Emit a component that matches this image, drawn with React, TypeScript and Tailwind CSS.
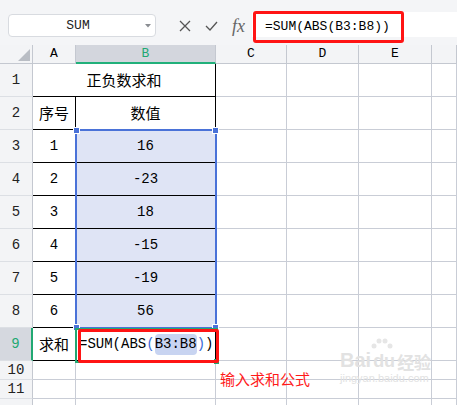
import React from 'react'

const mono = { fontFamily: '"Liberation Mono", "Noto Sans CJK SC", monospace' }
const cjk = { fontFamily: '"Noto Sans CJK SC", "Liberation Sans", sans-serif' }

const values = [
  ['1', '16'],
  ['2', '-23'],
  ['3', '18'],
  ['4', '-15'],
  ['5', '-19'],
  ['6', '56'],
]

function EmptyCells({ h }: { h: string }) {
  return (
    <>
      {[0, 1, 2, 3].map((i) => (
        <div key={i} className={`${h} border-b border-r border-[#c9cdd6]`} />
      ))}
    </>
  )
}

function RowHead({ n, h = 'h-[33px]', active = false }: { n?: number; h?: string; active?: boolean }) {
  return (
    <div
      className={`${h} flex items-center justify-center border-b border-[#dcdfe4] text-[14px] ${
        active ? 'border-r-2 border-r-[#21a872] bg-[#d5d8df] text-[#21a872]' : 'border-r border-r-[#c4c8d0] bg-[#f3f4f6] text-[#222]'
      }`}
      style={mono}
    >
      {n}
    </div>
  )
}

export default function App() {
  return (
    <div className="relative h-[405px] w-[457px] overflow-hidden bg-white">
      {/* formula toolbar */}
      <div className="flex h-[45px] items-start bg-[#f4f5f7] pt-[14px]">
        <div className="ml-2 flex h-[23px] w-[148px] items-center rounded-[4px] border border-[#d8dbe0] bg-white">
          <span className="flex-1 pl-[2px] text-center text-[13px] text-[#222]" style={mono}>SUM</span>
          <svg width="6" height="4" viewBox="0 0 6 4" className="mr-[4px]"><path d="M0 0h6L3 3.5z" fill="#8a8d92" /></svg>
        </div>
        <div className="ml-[23px] flex h-[23px] items-center gap-[14px]">
          <svg width="12" height="12" viewBox="0 0 12 12"><path d="M1 1l10 10M11 1L1 11" stroke="#555" strokeWidth="1.3" /></svg>
          <svg width="13" height="10" viewBox="0 0 13 10"><path d="M1 5l4 4 7-8" stroke="#555" strokeWidth="1.3" fill="none" /></svg>
          <span className="text-[18px] italic leading-none text-[#666]" style={{ fontFamily: '"Liberation Serif", serif' }}>fx</span>
        </div>
        <div className="relative ml-[7px] -mt-[2px] h-[25px] flex-1 bg-white">
          <div className="absolute -top-[1px] left-[1px] flex h-[32px] w-[151px] items-center rounded-[3px] border-[3px] border-[#ff1414] pl-[9px]">
            <span className="text-[13px] text-black" style={mono}>=SUM(ABS(B3:B8))</span>
          </div>
        </div>
      </div>

      {/* sheet grid */}
      <div className="relative grid grid-cols-[33px_43px_140px_71px_72px_73px_1fr]">
        {/* column headers */}
        <div className="flex h-[19px] items-end justify-end border-b border-r border-[#c4c8d0] bg-[#f3f4f6] pb-[2px] pr-[2px]">
          <svg width="12" height="12" viewBox="0 0 12 12"><path d="M12 0v12H0z" fill="#b9bdc4" /></svg>
        </div>
        <div className="flex h-[19px] items-center justify-center border-b border-r border-[#c4c8d0] bg-[#f3f4f6] text-[13px] text-black" style={mono}>A</div>
        <div className="flex h-[19px] items-center justify-center border-b-2 border-r border-b-[#21b07a] border-r-[#c4c8d0] bg-[#d3d6dd] text-[13px] text-[#21a872]" style={mono}>B</div>
        {['C', 'D', 'E', ''].map((c) => (
          <div key={c} className="flex h-[19px] items-center justify-center border-b border-r border-[#c4c8d0] bg-[#f3f4f6] text-[13px] text-black" style={mono}>{c}</div>
        ))}

        {/* row 1 */}
        <RowHead n={1} />
        <div className="col-span-2 flex h-[33px] items-center justify-center border-b border-r border-black text-[15px] text-black" style={cjk}>正负数求和</div>
        <EmptyCells h="h-[33px]" />

        {/* row 2 */}
        <RowHead n={2} />
        <div className="flex h-[33px] items-center justify-center border-b border-r border-black text-[15px] text-black" style={cjk}>序号</div>
        <div className="flex h-[33px] items-center justify-center border-b border-r border-black text-[15px] text-black" style={cjk}>数值</div>
        <EmptyCells h="h-[33px]" />

        {/* rows 3-8 */}
        {values.map(([idx, v], i) => (
          <React.Fragment key={idx}>
            <RowHead n={i + 3} />
            <div className="flex h-[33px] items-center justify-center border-b border-r border-black text-[14px] text-black" style={mono}>{idx}</div>
            <div className="flex h-[33px] items-center justify-center border-b border-r border-black bg-[#dfe4f5] text-[14px] text-black" style={mono}>{v}</div>
            <EmptyCells h="h-[33px]" />
          </React.Fragment>
        ))}

        {/* row 9 */}
        <RowHead n={9} active />
        <div className="flex h-[33px] items-center justify-center border-b border-r border-black text-[15px] text-black" style={cjk}>求和</div>
        <div className="flex h-[33px] items-center border-b border-r border-black pl-[3px] text-[14px] text-black" style={mono}>
          =SUM(ABS<span className="text-[#3b6bd9]">(</span>
          <span className="rounded-[4px] bg-[#c8d4f1]">B3:B8</span>
          <span className="text-[#3b6bd9]">)</span>)
        </div>
        <EmptyCells h="h-[33px]" />

        {/* rows 10-12 */}
        {[10, 11, 12].map((n) => (
          <React.Fragment key={n}>
            <RowHead n={n < 12 ? n : undefined} h="h-[19px]" />
            <div className="h-[19px] border-b border-r border-[#c9cdd6]" />
            <div className="h-[19px] border-b border-r border-[#c9cdd6]" />
            <EmptyCells h="h-[19px]" />
          </React.Fragment>
        ))}

        {/* selection B3:B8 */}
        <div className="absolute left-[75px] top-[84px] h-[200px] w-[142px] border-2 border-[#4a72d8]">
          <div className="absolute -left-[4px] -top-[4px] h-[7px] w-[7px] border border-white bg-[#4a72d8]" />
          <div className="absolute -right-[4px] -top-[4px] h-[7px] w-[7px] border border-white bg-[#4a72d8]" />
          <div className="absolute -bottom-[4px] -left-[4px] h-[7px] w-[7px] border border-white bg-[#4a72d8]" />
          <div className="absolute -bottom-[4px] -right-[4px] h-[7px] w-[7px] border border-white bg-[#4a72d8]" />
        </div>

        {/* active cell B9 */}
        <div className="absolute left-[75px] top-[283px] h-[35px] w-[143px] border-2 border-[#21a872]">
          <div className="absolute -bottom-[3px] -right-[3px] h-[5px] w-[5px] bg-[#21a872]" />
        </div>

        {/* annotation box */}
        <div className="absolute left-[78px] top-[284px] h-[34px] w-[141px] rounded-[2px] border-[3px] border-[#ff1414]" />
      </div>

      {/* annotation text */}
      <div className="absolute left-[220px] top-[371px] text-[15px] leading-none text-[#ff1a1a]" style={cjk}>输入求和公式</div>

      {/* watermark */}
      <div className="absolute left-[340px] top-[350px] text-[#e2e2e2]">
        <div className="flex items-end">
          <span className="text-[20px] font-bold leading-none" style={{ fontFamily: '"Liberation Sans", sans-serif' }}>Bai</span>
          <span className="relative ml-[2px] text-[18px] font-bold leading-none" style={{ fontFamily: '"Liberation Sans", sans-serif' }}>
            <svg width="24" height="16" viewBox="0 0 24 16" className="absolute -top-[15px] left-[-4px]">
              <circle cx="5" cy="9" r="2.5" fill="#e6e6e6" />
              <circle cx="10" cy="4" r="2.5" fill="#e6e6e6" />
              <circle cx="16" cy="4" r="2.5" fill="#e6e6e6" />
              <circle cx="21" cy="9" r="2.5" fill="#e6e6e6" />
            </svg>
            du
          </span>
          <span className="ml-[2px] text-[17px] font-bold leading-none" style={cjk}>经验</span>
        </div>
        <div className="mt-[3px] text-[11px] leading-none" style={{ fontFamily: '"Liberation Sans", sans-serif' }}>jingyan.baidu.com</div>
      </div>
    </div>
  )
}
